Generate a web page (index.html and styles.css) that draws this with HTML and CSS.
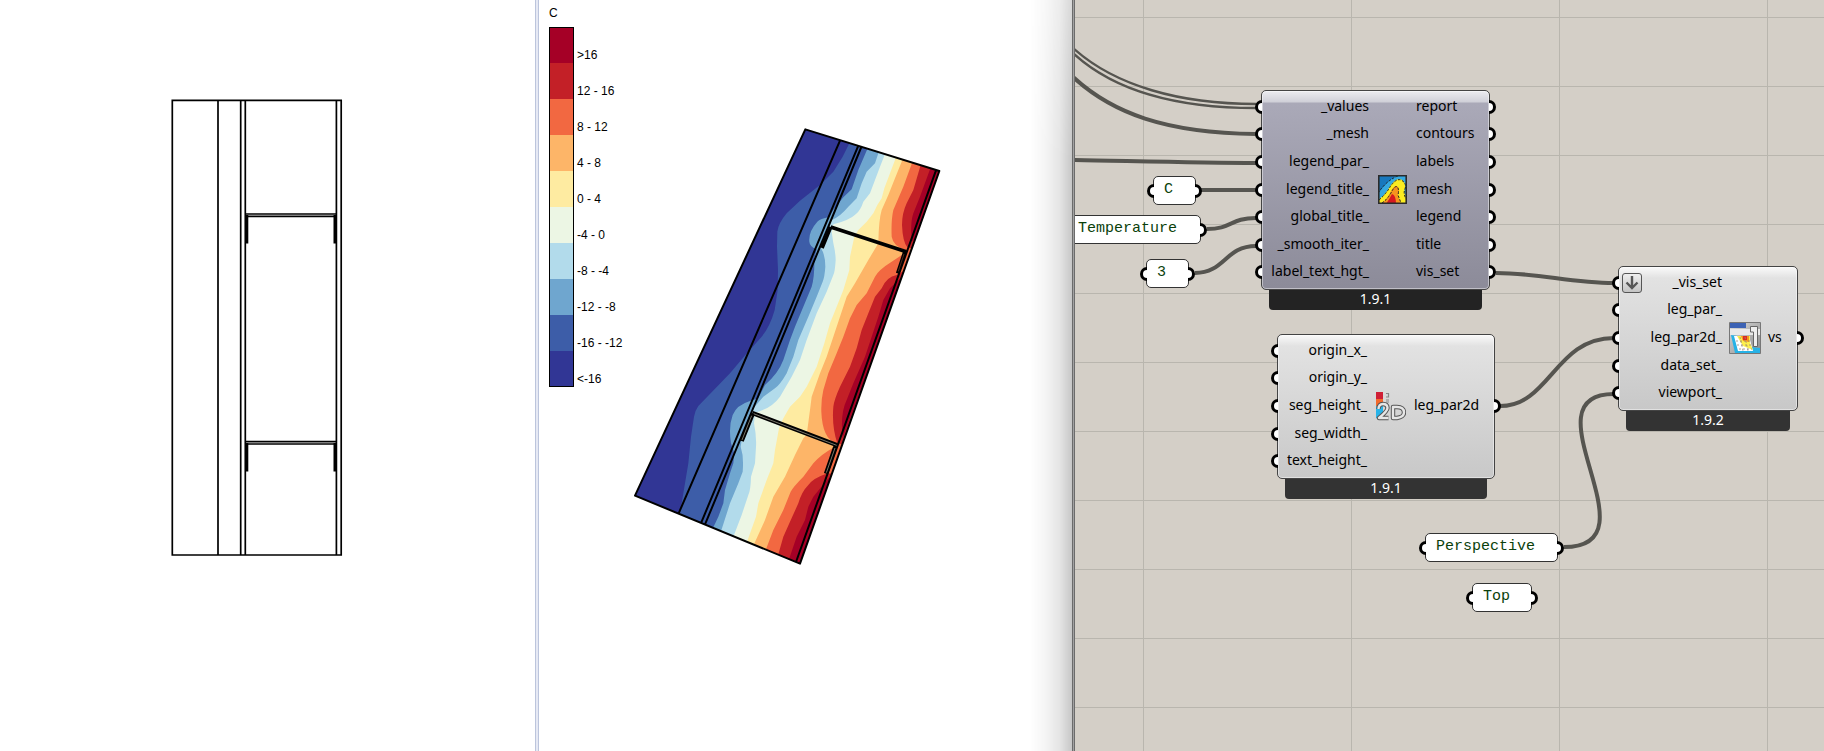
FILE: index.html
```
<!DOCTYPE html>
<html lang="en">
<head>
<meta charset="utf-8">
<meta name="viewport" content="width=device-width, initial-scale=1">
<title>Thermal section</title>
<link rel="stylesheet" href="styles.css">
</head>
<body>
<main class="workspace">
  <section class="view" aria-label="Top view">
    <svg class="drawing" viewBox="0 0 535 751" preserveAspectRatio="xMinYMin meet" fill="none" stroke="#000" stroke-width="1.7">
      <path d="M172.3 100.3H341.2V555H172.3ZM218 100V555M240.7 100V555M245.3 100V555M336.4 100V555"/>
      <path d="M246 214H336M246 216.4H336M246 441.6H336M246 444H336"/>
      <path stroke-width="2.6" d="M247 215V243.5M334.8 215V243.5M247 443V471.5M334.8 443V471.5"/>
    </svg>
  </section>
  <div class="splitter"></div>
  <section class="view view-result" aria-label="Perspective view">
    <svg class="drawing" viewBox="539 0 533 751" preserveAspectRatio="xMinYMin meet">
      <defs><clipPath id="section"><path d="M556 58L958 183L540 1361L45 1157Z"/></clipPath></defs>
      <g transform="translate(620 110) scale(.33333)">
        <g clip-path="url(#section)">
          <path fill="#313695" d="M0 0H1000V1400H0Z"/>
          <path fill="#3d5da8" d="M690 90L687 102L668 140L640 185L600 225L540 272L500 310Q475 340 472 365L471 410L474 480L473 540L464 600Q450 650 425 680L378 733L330 790L235 888Q226 900 222 920L213 980L205 1060L195 1120L185 1180L178 1215L100 1400H1000V90Z"/>
          <path fill="#6fa6cf" d="M750 90L743 115L715 180L695 238L670 262L640 300L628 321Q600 326 592 335Q565 365 568 395Q569 410 590 418L583 445Q584 500 575 530L550 590L525 650L510 690L490 750Q475 790 435 825L415 865L390 873Q350 885 338 915Q325 950 333 1000L343 1030L340 1060L330 1090L315 1140L310 1180L295 1220L280 1252L240 1400H1000V90Z"/>
          <path fill="#b2dbeb" d="M785 90L775 130L765 160L740 185L725 220L710 265L685 290Q660 320 635 330L625 350L612 390L603 415Q616 435 616 470Q614 500 608 515L590 560L565 620L535 690L520 740L500 790Q480 825 465 835L430 860L400 895L385 930L365 990L362 1010Q372 1040 368 1085L355 1120L330 1180L305 1258L260 1400H1000V90Z"/>
          <path fill="#ecf6e4" d="M805 90L795 132L780 170L765 210L750 250L730 275Q722 300 708 312Q690 330 640 343L635 365L640 400Q647 430 647 450Q645 485 640 495L620 545L590 610L560 690L540 750L515 800L480 860Q455 895 405 908L402 940Q410 980 408 1010L405 1060L393 1100Q392 1140 385 1155L365 1215L342 1275L300 1400H1000V90Z"/>
          <path fill="#feeba1" d="M838 90L825 150L810 190L793 235L785 265L772 285L760 310L740 335L715 360L703 380L690 440L688 480L670 540L650 590L630 640L613 700L590 770L560 830L540 860L510 890L490 925L477 955L465 1020L460 1060L440 1110L415 1180L408 1220L380 1298L340 1400H1000V90Z"/>
          <path fill="#fdb568" d="M860 90L845 155L825 205L805 255L785 300Q776 330 775 400L745 450L705 520L680 560L660 620L640 680L620 740L600 790L575 860L570 900L560 975L550 985L525 1035L495 1100L460 1160L435 1230L402 1303L360 1400H1000V90Z"/>
          <path fill="#f26841" d="M895 90L875 162L850 230L820 300Q813 330 815 380Q820 410 858 420L850 432L815 455Q775 480 765 500L740 550L710 585L690 625L670 680L650 730L625 790L610 840Q603 870 604 905Q607 985 648 1000L640 1013Q600 1035 580 1060L550 1100Q520 1130 512 1145L490 1200L460 1260L438 1318L410 1400H1000V90Z"/>
          <path fill="#c32027" d="M920 90L900 172L880 240L860 280Q846 310 846 345Q848 395 862 412L875 415L1000 300V90ZM860 478L830 495Q800 500 785 535L765 560L745 610L725 660L710 715L690 770L660 830Q642 870 640 890Q635 950 652 1000L667 1003L860 480ZM635 1090L615 1093Q580 1105 565 1125Q545 1145 535 1180L510 1235L490 1280L475 1333L460 1400H600L700 1090Z"/>
          <path fill="#a50026" d="M955 90L930 178L900 260L880 310Q870 340 875 395L1000 300V90ZM845 500L810 535L790 570L775 620L755 680L735 740L700 820L680 870Q660 910 668 985L850 500ZM625 1105L580 1160L565 1190L555 1230L530 1280L508 1345L490 1400H600L720 1100Z"/>
        </g>
        <g fill="none" stroke="#000" stroke-width="6" stroke-linejoin="round">
          <path d="M556 58L958 183L540 1361L45 1157ZM660 92L176 1210M715 107L244 1237M724 111L256 1241M948 181L528 1356"/>
          <path stroke-width="11" d="M632 351L859 425M632 351L606 414M854 427L833 490"/>
          <path stroke="#7c3a26" stroke-width="2" d="M852 432L835 484"/>
          <path stroke-width="13" d="M397 909L652 1006M398 912L365 993M646 1010L618 1091"/>
          <path stroke="#777569" stroke-width="3" d="M401 911L650 1006M395 917L366 990M645 1014L619 1088"/>
        </g>
      </g>
    </svg>
    <div class="legend">
      <h2 class="legend-title">C</h2>
      <ol class="legend-list">
        <li class="step step-1"><span>&gt;16</span></li>
        <li class="step step-2"><span>12 - 16</span></li>
        <li class="step step-3"><span>8 - 12</span></li>
        <li class="step step-4"><span>4 - 8</span></li>
        <li class="step step-5"><span>0 - 4</span></li>
        <li class="step step-6"><span>-4 - 0</span></li>
        <li class="step step-7"><span>-8 - -4</span></li>
        <li class="step step-8"><span>-12 - -8</span></li>
        <li class="step step-9"><span>-16 - -12</span></li>
        <li class="step step-10"><span>&lt;-16</span></li>
      </ol>
    </div>
  </section>
  <div class="window-edge"></div>
  <section class="canvas" aria-label="Node canvas">
    <svg class="wires" width="749" height="751" viewBox="1075 0 749 751" fill="none" stroke="#565550" stroke-width="4">
      <path stroke-width="2.4" d="M1073 48C1115 86 1180 104 1256 104M1073 53C1115 92 1180 108 1256 108"/>
      <path d="M1073 77C1112 113 1165 133 1256 134M1073 160C1130 161 1200 163 1256 163M1201 190H1256M1207 229C1232 229 1230 218 1256 218M1195 273C1225 273 1225 246 1256 246"/>
      <path d="M1496 273C1540 273 1570 283 1614 283M1500 406C1550 406 1555 338 1614 338M1564 547C1660 547 1522 394 1614 394"/>
    </svg>

    <article class="node node-spatial">
      <div class="node-body">
        <ul class="ports ports-in">
          <li>_values</li><li>_mesh</li><li>legend_par_</li><li>legend_title_</li><li>global_title_</li><li>_smooth_iter_</li><li>label_text_hgt_</li>
        </ul>
        <svg class="node-icon" width="29" height="29" viewBox="0 0 29 29">
          <path fill="#1878bd" d="M0 0H29V29H0Z"/>
          <path fill="#35a9e1" d="M0 19Q10 4 21 0H29V29H0Z"/>
          <path fill="#fbec21" d="M0 25Q7 20 11 13Q16 4 22 4Q28 6 27 13Q25 17 29 23V29H0Z"/>
          <path fill="#f7941e" d="M3 29Q10 23 13 16Q17 9 20 12Q22 15 20 20L23 29Z"/>
          <path fill="#d71920" d="M8 29Q12 23 14 19Q18 20 18 29Z"/>
          <path fill="none" stroke="#222" stroke-width="1" stroke-dasharray="2.5 1.5" d="M0 18Q9 5 20 1M1 25Q8 19 12 12Q18 3 23 5Q29 8 27 14Q25 18 28 24M4 28Q10 24 14 16Q18 9 20 13Q21 16 20 20L23 28"/>
          <path fill="none" stroke="#2b2b2b" stroke-width="1.6" d="M.8.8H28.2V28.2H.8Z"/>
        </svg>
        <ul class="ports ports-out">
          <li>report</li><li>contours</li><li>labels</li><li>mesh</li><li>legend</li><li>title</li><li>vis_set</li>
        </ul>
      </div>
      <footer class="node-version">1.9.1</footer>
    </article>

    <article class="node node-legend">
      <div class="node-body">
        <ul class="ports ports-in">
          <li>origin_x_</li><li>origin_y_</li><li>seg_height_</li><li>seg_width_</li><li>text_height_</li>
        </ul>
        <svg class="node-icon" width="31" height="29" viewBox="0 0 31 29">
          <path fill="#cf1f35" d="M1 0H8V7H1Z"/><path fill="#f36a2c" d="M1 7H8V14H1Z"/><path fill="#28b3e8" d="M1 14H8V26H1Z"/>
          <path fill="none" stroke="#888" stroke-width="1.2" d="M11 1.500H13.500V5H11M11 8H14M11 10H14"/>
          <path fill="none" stroke="#555" stroke-width="4.400" stroke-linejoin="round" d="M3.500 17Q3.500 12 8 12Q12.500 12 12.500 16Q12.500 19 4 26H13.500M18 15V26H22Q29 25 29 20.500Q29 15 22 15Z"/>
          <path fill="none" stroke="#e6e6e6" stroke-width="2.400" stroke-linejoin="round" d="M3.500 17Q3.500 12 8 12Q12.500 12 12.500 16Q12.500 19 4 26H13.500M18 15V26H22Q29 25 29 20.500Q29 15 22 15Z"/>
        </svg>
        <ul class="ports ports-out"><li>leg_par2d</li></ul>
      </div>
      <footer class="node-version">1.9.1</footer>
    </article>

    <article class="node node-visset">
      <div class="node-body">
        <button class="node-expand" type="button" aria-label="Expand">
          <svg width="18" height="18" viewBox="0 0 18 18" fill="none" stroke="#555" stroke-width="2.400"><path d="M9 2V14M3.500 8.500L9 14L14.500 8.500"/></svg>
        </button>
        <ul class="ports ports-in">
          <li>_vis_set</li><li>leg_par_</li><li>leg_par2d_</li><li>data_set_</li><li>viewport_</li>
        </ul>
        <svg class="node-icon" width="32" height="32" viewBox="0 0 32 32">
          <defs><linearGradient id="pane" x2="1" y2="1"><stop stop-color="#ddd"/><stop offset="1" stop-color="#888"/></linearGradient></defs>
          <path fill="url(#pane)" stroke="#777" d="M.5.5H31.500V31.500H.5Z"/>
          <path fill="#3c62b4" d="M1 1H17V6H1Z"/>
          <path fill="#e9e9e9" d="M1 7H31V13H1Z"/>
          <path fill="#27b2e6" d="M2 13L6 31H31V26L22 25L9 14Z"/>
          <path fill="#fff" d="M5 14H20L24 29H9Z"/>
          <path fill="#fdf04c" d="M8 14H21V21L24 28L14 24Z"/>
          <path fill="#f7941e" d="M12 14H20V20L14 19Z"/><path fill="#dc2b20" d="M14 14H18V18H14Z"/>
          <path fill="none" stroke="#987" stroke-width=".8" stroke-dasharray="2 2" d="M7 19H21M8 23H22M10 27H23M11 15L14 29M16 15L19 29"/>
          <path fill="#eee" stroke="#666" d="M21.500 4.500H28.500V24.500H24.500V10H21.500Z"/>
        </svg>
        <ul class="ports ports-out"><li>vs</li></ul>
      </div>
      <footer class="node-version">1.9.2</footer>
    </article>

    <div class="panel panel-c">C</div>
    <div class="panel panel-temperature">Temperature</div>
    <div class="panel panel-three">3</div>
    <div class="panel panel-perspective">Perspective</div>
    <div class="panel panel-top">Top</div>
  </section>
</main>
</body>
</html>
```
FILE: styles.css
```
*, *::before, *::after { box-sizing: border-box; }
body { margin: 0; background: #fff; color: #000; }
ul, ol, h2 { margin: 0; padding: 0; list-style: none; font-weight: normal; }

.workspace {
  display: grid;
  grid-template-columns: 535fr 4px 533fr 3px 749fr;
  min-height: 100vh;
}
.view { position: relative; min-width: 0; overflow: hidden; }
.drawing { display: block; width: 100%; }
.splitter { background: #e6e9f4; border: solid #bcc5dc; border-width: 0 1px; }
.view-result::after {
  content: "";
  position: absolute;
  inset: 0 0 0 auto;
  width: 42px;
  background: linear-gradient(to right, rgba(0,0,0,0), rgba(0,0,0,.04) 35%, rgba(0,0,0,.1) 70%, rgba(0,0,0,.22));
  mask-image: linear-gradient(rgba(0,0,0,.7), #000 160px);
}
.window-edge { background: #a2a2a2; border: solid #6c6c6c; border-width: 0 1px; }

/* Colour legend */
.legend { position: absolute; top: 5px; left: 10px; font: 12px/16px "Liberation Sans", Arial, sans-serif; }
.legend-title { font-size: 12px; line-height: 16px; margin-bottom: 6px; }
.legend-list { width: 25px; outline: 1px solid #000; outline-offset: -1px; }
.step { display: flex; align-items: flex-end; height: 36px; white-space: nowrap; }
.step span { margin-left: 28px; }
.step-1 { background: #a50026; }
.step-2 { background: #c32027; }
.step-3 { background: #f26841; }
.step-4 { background: #fdb568; }
.step-5 { background: #feeba1; }
.step-6 { background: #ecf6e4; }
.step-7 { background: #b2dbeb; }
.step-8 { background: #6fa6cf; }
.step-9 { background: #3d5da8; }
.step-10 { background: #313695; }

/* Node canvas */
.canvas {
  position: relative;
  overflow: hidden;
  background-color: #d4cfc7;
  background-image:
    linear-gradient(to right, #b9b6ae 1px, transparent 1px),
    linear-gradient(#b9b6ae 1px, transparent 1px);
  background-size: 208px 100%, 100% 69px;
  background-position: 68px 0, 0 17px;
}
.wires { position: absolute; top: 0; left: 0; }
.node { position: absolute; font: 14px/20px "Noto Sans", "Open Sans", sans-serif; }
.node-spatial { left: 186px; top: 90px; width: 229px; }
.node-legend { left: 202px; top: 334px; width: 218px; }
.node-visset { left: 543px; top: 266px; width: 180px; }
.node-body {
  position: relative;
  display: grid;
  align-items: center;
  column-gap: 9px;
  height: 145px;
  padding: 2px 0 3px;
  border: 1px solid #444;
  border-radius: 5px;
  background: linear-gradient(#fafafa, #e2e2e2 11px, #c8c8c8);
  box-shadow: inset 0 0 0 1px rgba(255,255,255,.45);
}
.node-spatial .node-body { grid-template-columns: 107px 29px 1fr; height: 200px; background: linear-gradient(#ececf0, #d0d0d8 11px, #aaa9b8 12px, #8c8b99); }
.node-legend .node-body { grid-template-columns: 89px 31px 1fr; column-gap: 8px; }
.node-visset .node-body { grid-template-columns: 103px 32px 1fr; column-gap: 7px; }
.ports { display: flex; flex-direction: column; height: 100%; }
.ports li { position: relative; flex: 1; display: flex; align-items: center; padding-bottom: 2px; white-space: nowrap; }
.ports-in li { justify-content: flex-end; }
.ports li::before {
  content: "";
  position: absolute;
  top: calc(50% - 7px);
  width: 7px;
  height: 14px;
  border: 3px solid #000;
  background: #fff;
}
.ports-in li::before { left: -7px; border-right: 0; border-radius: 7px 0 0 7px; }
.ports-out li::before { right: -7px; border-left: 0; border-radius: 0 7px 7px 0; }
.node-icon { display: block; }
.node-expand {
  position: absolute;
  top: 6px;
  left: 3px;
  width: 20px;
  height: 20px;
  padding: 0;
  border: 1px solid #555;
  border-radius: 3px;
  background: linear-gradient(#eee, #c4c4c4);
}
.node-expand svg { display: block; }
.node-version {
  margin: 0 8px;
  padding-bottom: 2px;
  line-height: 18px;
  border-radius: 0 0 4px 4px;
  background: #333;
  color: #fff;
  text-align: center;
}
.node-spatial .node-version { background: #232323; }

.panel {
  position: absolute;
  height: 29px;
  padding: 3px 10px;
  border: 1px solid #333;
  border-radius: 5px;
  background: #fff;
  color: #0b3f0b;
  font: 15px/20px "Liberation Mono", "Courier New", monospace;
}
.panel::before, .panel::after {
  content: "";
  position: absolute;
  top: 7px;
  width: 7px;
  height: 14px;
  border: 3px solid #000;
  background: #fff;
}
.panel::before { left: -7px; border-right: 0; border-radius: 7px 0 0 7px; }
.panel::after { right: -7px; border-left: 0; border-radius: 0 7px 7px 0; }
.panel-c { left: 78px; top: 176px; width: 43px; }
.panel-temperature { left: -8px; top: 215px; width: 134px; }
.panel-three { left: 71px; top: 259px; width: 43px; }
.panel-perspective { left: 350px; top: 533px; width: 133px; }
.panel-top { left: 397px; top: 583px; width: 60px; }
```
